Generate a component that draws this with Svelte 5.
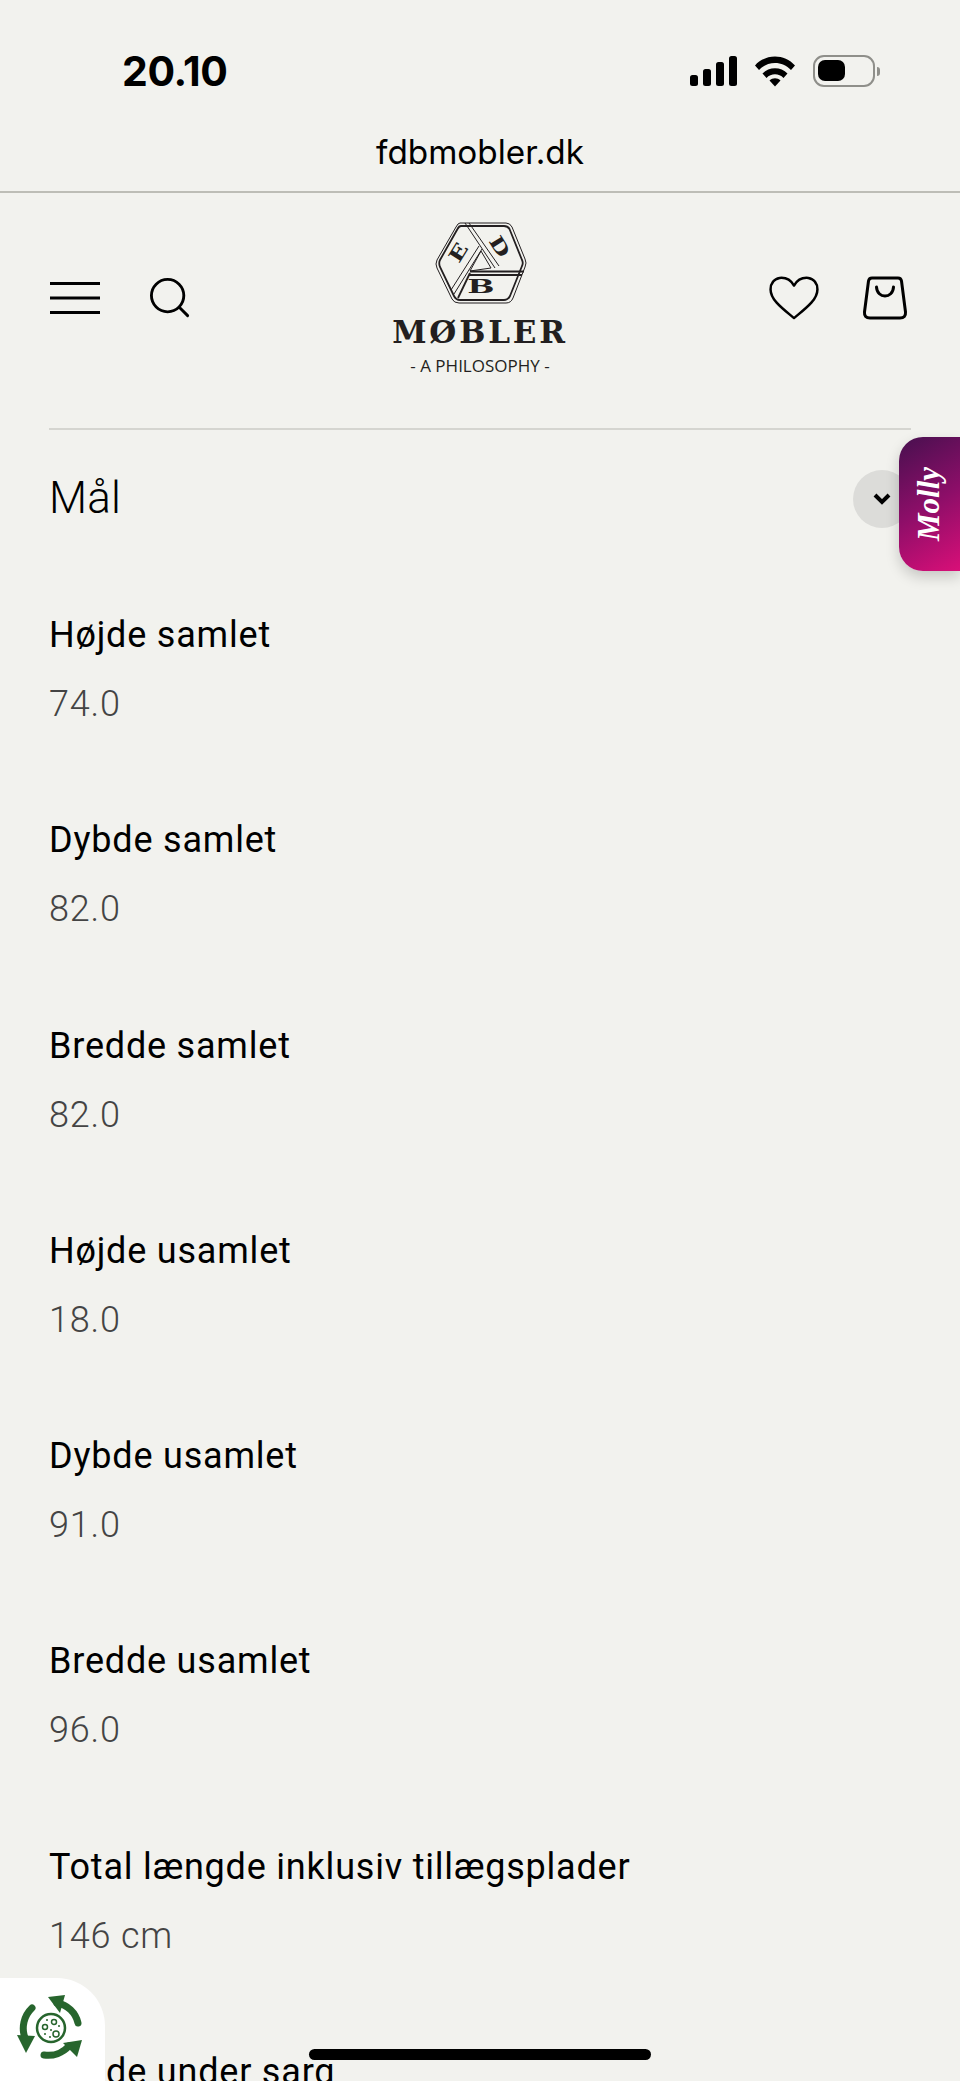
<script>
  const specs = [
    ['Højde samlet', '74.0'],
    ['Dybde samlet', '82.0'],
    ['Bredde samlet', '82.0'],
    ['Højde usamlet', '18.0'],
    ['Dybde usamlet', '91.0'],
    ['Bredde usamlet', '96.0'],
    ['Total længde inklusiv tillægsplader', '146 cm'],
    ['Højde under sarg', '']
  ];
</script>

<div class="page">
  <div class="status">
    <span class="time">20.10</span>
    <div class="status-icons">
      <svg width="48" height="32" viewBox="0 0 48 32">
        <rect x="1" y="20" width="8" height="11" rx="2.5" />
        <rect x="14" y="14" width="8" height="17" rx="2.5" />
        <rect x="27" y="7" width="8" height="24" rx="2.5" />
        <rect x="40" y="1" width="8" height="30" rx="2.5" />
      </svg>
      <svg width="42" height="32" viewBox="0 0 42 32">
        <path d="M1 10.5C11.5 -1.5 30.5 -1.5 41 10.5L37 15C28.5 5.5 13.5 5.5 5 15Z" />
        <path d="M8.5 18.5C15 11.5 27 11.5 33.5 18.5L29.500 23C25 18 17 18 12.500 23Z" />
        <path d="M15.500 25.500C18.500 22.500 23.500 22.500 26.500 25.500L21 31.500Z" />
      </svg>
      <div class="battery">
        <div class="battery-body"><div class="battery-fill"></div></div>
        <div class="battery-nub"></div>
      </div>
    </div>
  </div>
  <div class="url">fdbmobler.dk</div>

  <header>
    <div class="header-left">
      <svg width="52" height="32" viewBox="0 0 52 32" class="line-icon">
        <path d="M1 1.500H51M1 16H51M1 30.500H51" />
      </svg>
      <svg width="40" height="40" viewBox="0 0 42 42" class="line-icon">
        <circle cx="18.500" cy="18.500" r="17" />
        <path d="M31 31L39.500 39.500" stroke-linecap="round" />
      </svg>
    </div>
    <div class="logo">
      <svg width="104" height="94" viewBox="0 0 104 94" class="logo-mark">
        <path class="thin" d="M32 7H78Q82 7 84 11L97 43Q99 47 97 51L85 82Q83 87 78 87H31Q26 87 24 83L9 52Q7 48 9 44L28 11Q30 7 32 7Z" />
        <path class="thick" d="M33 10H76Q80 10 81.500 13L94 44Q95.500 47 94 50L82 80Q80 84 76 84H32Q28 84 26 80L12 51Q10.500 47 12 44L29.500 13Q31 10 33 10Z" />
        <path class="thin" d="M37 7L67 52M41 7L71 50" />
        <path class="thick" d="M42 55.500H96M41 59H94" />
        <path class="thin" d="M53 35L63 52L42 55Z" />
        <path class="thin" d="M54 33L26 78M51 30L23 74" />
        <path class="thick" d="M42 57L30 82" />
        <text class="mark-letter" transform="translate(53 77) scale(1.700 1)">B</text>
        <text class="mark-letter" transform="translate(36 40) rotate(-58) scale(1.300 1)">E</text>
        <text class="mark-letter" transform="translate(66 34) rotate(58) scale(1.300 1)">D</text>
      </svg>
      <div class="logo-name">MØBLER</div>
      <div class="logo-tag">- A PHILOSOPHY -</div>
    </div>
    <div class="header-right">
      <svg width="50" height="44" viewBox="0 0 52 46" class="line-icon heart">
        <path d="M26 10C22 3 16 1.500 11 2C5 3 1.500 8 1.500 14C1.500 25 14 34 26 44C38 34 50.500 25 50.500 14C50.500 8 47 3 41 2C36 1.500 30 3 26 10Z" stroke-linejoin="round" />
      </svg>
      <svg width="44" height="44" viewBox="0 0 44 44" class="line-icon">
        <path d="M9 2H35Q38 2 38.500 5L42.500 36Q43 42 37 42H7Q1 42 1.500 36L5.500 5Q6 2 9 2Z" />
        <path d="M13.500 11C14 23 30 23 30.500 11" stroke-linecap="round" />
      </svg>
    </div>
  </header>

  <main>
    <div class="section-head">
      <h2>Mål</h2>
      <div class="chevron">
        <svg width="18" height="12" viewBox="0 0 18 12"><path d="M2 2L9 9L16 2" /></svg>
      </div>
    </div>
    {#each specs as [label, value]}
      <div class="row">
        <div class="label">{label}</div>
        <div class="value">{value}</div>
      </div>
    {/each}
  </main>

  <div class="molly"><span>Molly</span></div>

  <div class="eco">
    <svg width="76" height="76" viewBox="-38 -38 76 76">
      <g class="eco-arrows">
        <path d="M6 -25A26 26 0 0 1 27 -5" />
        <path d="M-19 -20A28 28 0 0 0 -26 10" />
        <path d="M-7 27A28 28 0 0 0 18 18" />
      </g>
      <path class="eco-head" d="M-3 -31L14 -33L9 -15Z" />
      <path class="eco-head" d="M-34 7L-16 8L-25 25Z" />
      <path class="eco-head" d="M31 12L26 29L12 15Z" />
      <circle class="eco-ring" r="14" />
      <circle class="eco-ring thin" cx="-6" cy="-1" r="2.500" />
      <circle class="eco-ring thin" cx="3" cy="-6" r="2.500" />
      <circle class="eco-ring thin" cx="5" cy="6" r="3" />
      <circle class="eco-dot" cx="-4" cy="-8" r="1" />
      <circle class="eco-dot" cx="8" cy="-2" r="1" />
      <circle class="eco-dot" cx="0" cy="2" r="1" />
      <circle class="eco-dot" cx="-6" cy="6" r="1" />
      <circle class="eco-dot" cx="-1" cy="9" r="1" />
    </svg>
  </div>

  <div class="home-bar"></div>
</div>

<style>
  :global(body) {
    background: #f2f2ee;
  }

  .page {
    position: relative;
    height: 2081px;
    overflow: hidden;
    background: #f2f2ee;
    color: #000;
    font-family: Roboto, sans-serif;
  }

  .status {
    display: flex;
    justify-content: space-between;
    align-items: center;
    height: 42px;
    padding: 50px 80px 30px 122px;
  }
  .time {
    font-family: Inter, sans-serif;
    font-size: 41px;
    font-weight: 700;
    letter-spacing: -0.4px;
  }
  .status-icons {
    display: flex;
    align-items: center;
    gap: 17px;
  }
  .status-icons svg {
    fill: #000;
  }
  .battery {
    display: flex;
    align-items: center;
    gap: 2px;
  }
  .battery-body {
    box-sizing: border-box;
    width: 62px;
    height: 32px;
    padding: 3px;
    border: 2.5px solid #8f8f8a;
    border-radius: 11px;
  }
  .battery-fill {
    width: 27px;
    height: 21px;
    background: #000;
    border-radius: 7px;
  }
  .battery-nub {
    width: 3px;
    height: 9px;
    background: #8f8f8a;
    border-radius: 0 3px 3px 0;
  }

  .url {
    height: 71px;
    line-height: 60px;
    text-align: center;
    font-family: Inter, sans-serif;
    font-size: 33.300px;
    border-bottom: 2px solid #bdbdb6;
    box-sizing: border-box;
  }

  header {
    display: grid;
    grid-template-columns: 1fr auto 1fr;
    align-items: center;
    padding: 27px 49px 50px;
  }
  .header-left {
    display: flex;
    align-items: center;
    gap: 49px;
    margin-bottom: 3px;
  }
  .header-right {
    display: flex;
    align-items: center;
    justify-content: flex-end;
    gap: 44px;
    padding-right: 4px;
    margin-bottom: 3px;
  }
  .line-icon {
    fill: none;
    stroke: #000;
    stroke-width: 3;
    overflow: visible;
  }
  .line-icon.heart {
    stroke-width: 2.600;
  }

  .logo {
    display: flex;
    flex-direction: column;
    align-items: center;
    color: #231f20;
  }
  .logo-mark {
    display: block;
    margin-top: -4px;
  }
  .thin {
    fill: none;
    stroke: #231f20;
    stroke-width: 1;
  }
  .thick {
    fill: none;
    stroke: #231f20;
    stroke-width: 1.800;
  }
  .mark-letter {
    font-family: "DejaVu Serif", serif;
    font-weight: 700;
    font-size: 19px;
    text-anchor: middle;
    fill: #231f20;
  }
  .logo-name {
    font-family: "DejaVu Serif", serif;
    font-weight: 700;
    font-size: 31px;
    line-height: 36px;
    letter-spacing: 2.800px;
    margin-top: 4px;
  }
  .logo-tag {
    font-family: "Open Sans", sans-serif;
    font-size: 17px;
    line-height: 24px;
    margin-top: 4px;
  }

  main {
    margin: 0 49px;
    border-top: 2px solid #d5d5d0;
  }
  .section-head {
    display: flex;
    justify-content: space-between;
    align-items: center;
    padding-top: 37px;
    margin-bottom: 86px;
  }
  h2 {
    margin: 0;
    font-size: 44px;
    line-height: 52px;
    font-weight: 300;
    letter-spacing: 0.2px;
  }
  .chevron {
    display: flex;
    align-items: center;
    justify-content: center;
    width: 58px;
    height: 58px;
    margin-top: 3px;
    border-radius: 50%;
    background: #dcdcd9;
  }
  .chevron svg {
    fill: none;
    stroke: #000;
    stroke-width: 4;
  }

  .row {
    height: 205.300px;
  }
  .label {
    font-size: 36px;
    line-height: 42px;
    letter-spacing: 0.8px;
  }
  .value {
    margin-top: 27px;
    font-size: 36px;
    line-height: 42px;
    font-weight: 300;
    color: #444;
    letter-spacing: 0.8px;
  }

  .molly {
    position: absolute;
    top: 437px;
    right: 0;
    display: flex;
    align-items: center;
    justify-content: center;
    width: 61px;
    height: 134px;
    border-radius: 24px 0 0 24px;
    background: linear-gradient(150deg, #47104f, #8c0e68 50%, #d90f78);
    box-shadow: 0 6px 14px rgba(0, 0, 0, 0.18);
  }
  .molly span {
    transform: rotate(-90deg);
    font-family: "Liberation Serif", serif;
    font-style: italic;
    font-weight: 700;
    font-size: 31px;
    color: #fff;
  }

  .eco {
    position: absolute;
    left: 0;
    top: 1978px;
    display: flex;
    align-items: center;
    justify-content: center;
    box-sizing: border-box;
    width: 105px;
    height: 103px;
    padding-right: 3px;
    border-radius: 0 48px 0 0;
    background: #fff;
  }
  .eco svg {
    margin-bottom: 4px;
  }
  .eco-arrows {
    fill: none;
    stroke: #27652d;
    stroke-width: 7;
    stroke-linecap: round;
  }
  .eco-head,
  .eco-dot {
    fill: #27652d;
  }
  .eco-ring {
    fill: none;
    stroke: #27652d;
    stroke-width: 2.500;
  }
  .eco-ring.thin {
    stroke-width: 1.500;
  }

  .home-bar {
    position: absolute;
    left: 309px;
    top: 2049px;
    width: 342px;
    height: 11px;
    border-radius: 6px;
    background: #000;
  }
</style>
